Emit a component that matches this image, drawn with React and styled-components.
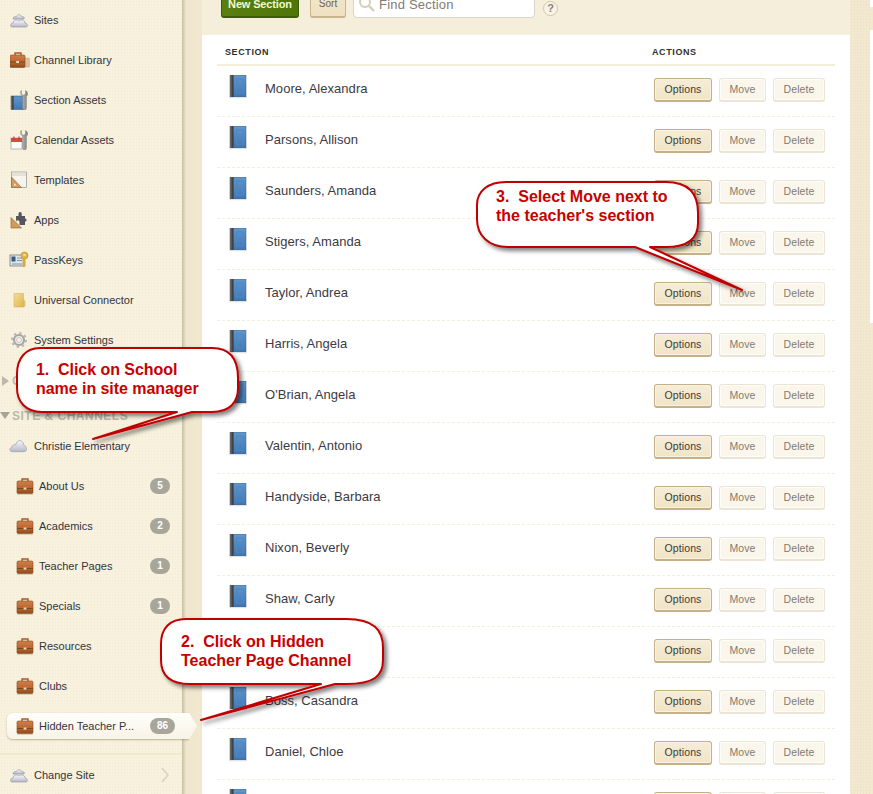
import React from 'react';
import styled, { createGlobalStyle } from 'styled-components';

const Global = createGlobalStyle`
  html, body { margin: 0; padding: 0; background: #fff; }
  body { font-family: "Liberation Sans", Arial, sans-serif; }
`;

const Page = styled.div`
  position: relative;
  width: 873px;
  height: 794px;
  overflow: hidden;
  display: flex;
  background: #fff;
`;
const Sidebar = styled.nav`
  position: relative;
  z-index: 1;
  flex: none;
  width: 182px;
  height: 794px;
  box-sizing: border-box;
  background-color: #f7f1de;
  background-image: radial-gradient(#f2ead2 0.7px, transparent 0.8px);
  background-size: 3px 3px;
  display: flex;
  flex-direction: column;
`;
const Gutter = styled.div`
  flex: none;
  width: 20px;
  background: linear-gradient(90deg, #c9bea0 0, #dcd2b6 2px, #efe6cd 4px, #f1e8cf 100%);
`;
const Main = styled.main`
  flex: none;
  width: 648px;
  display: flex;
  flex-direction: column;
  background: #fff;
`;
const RightEdge = styled.div`
  flex: none;
  width: 20px;
  background-color: #f2e8cf;
  background-image: radial-gradient(#ebdfc0 0.7px, transparent 0.8px);
  background-size: 3px 3px;
`;
const Rail = styled.div`
  flex: 1;
  display: flex;
  flex-direction: column;
  padding-top: 7px;
`;
const RailTab = styled.div`
  flex: ${p => (p.$grow ? 1 : 'none')};
  height: ${p => (p.$grow ? 'auto' : '23px')};
  margin-top: ${p => (p.$grow ? 293 : 0)}px;
  background: #f2e8cf;
`;
const Item = styled.a`
  height: 40px;
  flex: none;
  display: flex;
  align-items: center;
  gap: ${p => (p.$child ? 5 : 6)}px;
  padding-left: ${p => (p.$child ? 16 : 10)}px;
  font-size: 11px;
  color: #33333f;
  span.t { flex: 1; white-space: nowrap; }
`;
const SiteItem = styled(Item)`
  height: 31px;
  margin-bottom: 5px;
`;
const ActiveItem = styled(Item)`
  position: relative;
  box-sizing: border-box;
  width: 190px;
  height: 26px;
  margin: 7px 0 7px 7px;
  padding-left: 9px;
  padding-right: 22px;
  background: linear-gradient(#fffefb, #f8f3e5);
  border-radius: 6px 0 0 6px;
  clip-path: polygon(-4px -4px, 180px -4px, 190px 13px, 180px 30px, -4px 30px);
  box-shadow: 0 1px 2px rgba(120, 105, 70, .45);
`;
const Badge = styled.span`
  flex: none;
  width: ${p => (p.$wide ? 25 : 20)}px;
  height: 16px;
  margin-right: ${p => (p.$wide ? 0 : 12)}px;
  border-radius: 9px;
  background: #a8a69b;
  color: #fff;
  font-size: 10px;
  font-weight: bold;
  line-height: 15px;
  text-align: center;
`;
const GroupHead = styled.div`
  flex: none;
  height: ${p => p.$h}px;
  display: flex;
  align-items: center;
  gap: ${p => (p.$open ? 2 : 3)}px;
  font-size: 12px;
  font-weight: bold;
  color: #bcb8aa;
  white-space: nowrap;
  letter-spacing: .5px;
  &::before {
    content: "";
    width: 0; height: 0;
    border-style: solid;
    ${p => p.$open
      ? 'border-width: 7px 5px 0 5px; border-color: #a8a396 transparent transparent transparent;'
      : 'border-width: 5px 0 5px 7px; border-color: transparent transparent transparent #bcb8aa; margin-left: 2px;'}
  }
`;
const Foot = styled(Item)`
  border-top: 2px solid #f0e8cf;
  margin-top: 7px;
  height: 40px;
  padding-right: 13px;
`;
const Toolbar = styled.div`
  flex: none;
  height: 35px;
  box-sizing: border-box;
  padding: 0 0 17px 19px;
  background: #f5eeda;
  display: flex;
  align-items: flex-end;
  overflow: hidden;
`;
const NewBtn = styled.div`
  width: 78px;
  height: 30px;
  flex: none;
  border-radius: 3px;
  border: 1px solid #3d5c06;
  border-bottom-width: 2px;
  box-sizing: border-box;
  background: linear-gradient(90deg, #58800f, #4f7509);
  color: #f1f8d2;
  font-size: 11px;
  font-weight: bold;
  line-height: 30px;
  letter-spacing: -.15px;
  text-align: center;
`;
const SortBtn = styled.div`
  width: 36px;
  height: 30px;
  flex: none;
  margin-left: 11px;
  border-radius: 3px;
  border: 1px solid #c8b48d;
  border-bottom-width: 2px;
  box-sizing: border-box;
  background: linear-gradient(#f2e7cd, #efe1c0);
  color: #6a6255;
  font-size: 10px;
  line-height: 30px;
  text-align: center;
`;
const Search = styled.div`
  width: 182px;
  height: 30px;
  flex: none;
  margin-left: 7px;
  box-sizing: border-box;
  background: #fff;
  border: 1px solid #d8d5cc;
  border-radius: 4px;
  display: flex;
  align-items: flex-end;
  gap: 4px;
  padding: 0 0 5px 4px;
  font-size: 13px;
  letter-spacing: .2px;
  color: #807c74;
`;
const Help = styled.div`
  width: 13px;
  height: 13px;
  flex: none;
  margin: 0 0 2px 8px;
  border-radius: 50%;
  border: 1px solid #d9c69f;
  background: #f8f3e6;
  color: #8a8376;
  font-size: 11px;
  font-weight: bold;
  line-height: 13px;
  text-align: center;
`;
const Table = styled.div`
  flex: 1;
  padding: 0 15px;
  display: flex;
  flex-direction: column;
`;
const Head = styled.div`
  flex: none;
  height: 31px;
  box-sizing: border-box;
  border-bottom: 2px solid #f5eeda;
  display: flex;
  align-items: center;
  padding: 4px 0 0 8px;
  font-size: 9px;
  font-weight: bold;
  color: #33302c;
  letter-spacing: .6px;
`;
const HeadCell = styled.span`
  width: ${p => p.$w}px;
`;
const Row = styled.div`
  flex: none;
  height: 51px;
  box-sizing: border-box;
  border-bottom: 1px dashed #f3eee0;
  display: flex;
  align-items: center;
  padding: 0 10px 6px 12px;
`;
const Name = styled.div`
  flex: 1;
  margin-left: 16px;
  font-size: 13px;
  letter-spacing: .04px;
  color: #3c3a44;
  white-space: nowrap;
`;
const Btn = styled.div`
  flex: none;
  width: ${p => p.$w}px;
  height: 24px;
  margin-left: ${p => p.$gap}px;
  box-sizing: border-box;
  border-radius: 3px;
  margin-top: 4px;
  font-size: 10.5px;
  line-height: 20px;
  text-align: center;
  letter-spacing: .1px;
  ${p => p.$primary
    ? `background: linear-gradient(#f6edd8, #f1e4c6); border: 1px solid #c4b089; border-bottom-width: 2px; color: #3d3a35; box-shadow: inset 0 0 0 1px #f9f2e2;`
    : `background: #faf6ec; border: 1px solid #ece5d5; border-bottom-width: 2px; color: #827b6e; box-shadow: inset 0 0 0 1px #fffdf8;`}
`;

/* annotation callouts that lie over the page */
const Callout = styled.div`
  position: absolute;
  z-index: 2;
  left: ${p => p.$x}px;
  top: ${p => p.$y}px;
  width: ${p => p.$w}px;
  height: ${p => p.$h}px;
  pointer-events: none;
  svg { position: absolute; left: 0; top: 0; overflow: visible; }
`;
const CalloutText = styled.div`
  position: absolute;
  left: ${p => p.$x}px;
  top: ${p => p.$y}px;
  font-size: 16px;
  line-height: 19px;
  font-weight: bold;
  color: #c80000;
  white-space: pre;
  letter-spacing: ${p => p.$ls}px;
`;

const Defs = () => (
  <svg width="0" height="0" style={{ position: 'absolute' }}>
    <defs>
      <linearGradient id="gCase" x1="0" y1="0" x2="0" y2="1"><stop offset="0" stopColor="#cf7f48" /><stop offset=".55" stopColor="#b8682f" /><stop offset="1" stopColor="#8f4a1e" /></linearGradient>
      <linearGradient id="gBook" x1="0" y1="0" x2="0" y2="1"><stop offset="0" stopColor="#5f97ce" /><stop offset="1" stopColor="#3e77b4" /></linearGradient>
      <linearGradient id="gSpine" x1="0" y1="0" x2="1" y2="0"><stop offset="0" stopColor="#777" /><stop offset="1" stopColor="#2d2d2d" /></linearGradient>
      <linearGradient id="gCloud" x1="0" y1="0" x2="0" y2="1"><stop offset="0" stopColor="#f7f7fb" /><stop offset="1" stopColor="#b6b8c8" /></linearGradient>
      <linearGradient id="gFold" x1="0" y1="0" x2="1" y2="1"><stop offset="0" stopColor="#f6dc92" /><stop offset="1" stopColor="#dfb552" /></linearGradient>
      <linearGradient id="gSteel" x1="0" y1="0" x2="1" y2="0"><stop offset="0" stopColor="#c8c8c8" /><stop offset="1" stopColor="#7d7d7d" /></linearGradient>
    </defs>
  </svg>
);
const Ico = styled.svg`flex: none; display: block;`;

const CaseIcon = () => (
  <Ico width="18" height="18" viewBox="0 0 18 18">
    <path d="M6 4.500V2h6v2.500" fill="none" stroke="#a65a26" strokeWidth="1.400" />
    <rect x="1" y="4" width="16" height="12.500" rx="1.200" fill="url(#gCase)" stroke="#8a4a1f" strokeWidth=".6" />
    <path d="M1 11.500h16" stroke="#7f4219" strokeWidth=".9" />
    <rect x="7.600" y="10.500" width="2.800" height="2" fill="#e7dcc5" />
    <rect x="1" y="17" width="16" height="1" fill="#d9d2c0" />
  </Ico>
);
const LibraryIcon = () => (
  <Ico width="20" height="18" viewBox="0 0 20 18" style={{ marginRight: -2 }}>
    <rect x="13" y="7" width="6.500" height="9" rx=".8" fill="#dcbf9d" stroke="#c7a780" strokeWidth=".5" />
    <path d="M5 4.500V2h6v2.500" fill="none" stroke="#a65a26" strokeWidth="1.400" />
    <rect x="0" y="4" width="15" height="12.500" rx="1.200" fill="url(#gCase)" stroke="#8a4a1f" strokeWidth=".6" />
    <path d="M0 11h15" stroke="#7f4219" strokeWidth=".9" />
    <rect x="6.200" y="10" width="2.800" height="2" fill="#e7dcc5" />
  </Ico>
);
const BookIcon = () => (
  <Ico width="20" height="26" viewBox="0 0 20 26">
    <rect x="1" y="0" width="16" height="22" fill="url(#gBook)" />
    <rect x="1" y="0" width="3.500" height="22" fill="url(#gSpine)" />
    <rect x="7.500" y="4" width="7" height="14" fill="none" stroke="#4f86bf" strokeWidth="1" />
    <rect x="1" y="0" width="16" height="22" fill="none" stroke="#4a5a6a" strokeWidth=".5" />
    <rect x="0" y="22" width="18" height="1.200" fill="#e2e2e2" />
  </Ico>
);
const CloudsIcon = () => (
  <Ico width="18" height="18" viewBox="0 0 18 18">
    <path d="M3 8c0-2 2-3 3-2 1-3 5-3 6 0 2-1 3 1 2 2z" fill="url(#gCloud)" stroke="#8d8fa3" strokeWidth=".6" />
    <path d="M2 16c-2 0-2-4 1-4 0-3 4-4 6-2 2-2 6-1 6 2 3 0 3 4 1 4z" fill="url(#gCloud)" stroke="#8d8fa3" strokeWidth=".6" />
  </Ico>
);
const CloudIcon = () => (
  <Ico width="19" height="14" viewBox="0 0 20 14" style={{ marginLeft: -1 }}>
    <path d="M3.500 13C.5 13 0 9 3 8.200 3.500 5.500 6 5 7 6 8-.3 15-.3 15.300 6c3.500.2 4.500 7 .7 7z" fill="url(#gCloud)" stroke="#9a9cb0" strokeWidth=".7" />
  </Ico>
);
const WrenchPart = () => (
  <path d="M11.500 0.500v3.500l2 1.300 2-1.300V.5c2.400 1 2.800 4.500.9 6V18a1.900 1.900 0 0 1-3.800 0V6.500C10.700 5 9.200 1.500 11.500.5z" fill="url(#gSteel)" stroke="#6d6d6d" strokeWidth=".4" />
);
const SectionAssetIcon = () => (
  <Ico width="18" height="20" viewBox="0 0 18 20">
    <rect x="1" y="6" width="13" height="13.500" fill="url(#gBook)" stroke="#3d4a58" strokeWidth=".5" />
    <rect x="1" y="6" width="2.500" height="13.500" fill="url(#gSpine)" />
    <WrenchPart />
  </Ico>
);
const CalendarIcon = () => (
  <Ico width="18" height="20" viewBox="0 0 18 20">
    <rect x="1" y="8" width="11" height="11" fill="#fbfbfb" stroke="#777" strokeWidth=".5" />
    <rect x="1" y="8" width="11" height="4" fill="#dc4a38" />
    <path d="M4 6.500v3M9 6.500v3" stroke="#555" strokeWidth="1" />
    <WrenchPart />
  </Ico>
);
const TemplateIcon = () => (
  <Ico width="18" height="18" viewBox="0 0 18 18">
    <rect x="1.500" y="1" width="15" height="15.500" fill="#f6f4ec" stroke="#909090" strokeWidth=".7" />
    <rect x="2" y="1.500" width="14" height="3.500" fill="#e4e2d6" />
    <path d="M1.500 6 11.500 16.500H1.500z" fill="#d49a5c" stroke="#8f5f2c" strokeWidth=".6" />
    <path d="M4 12l2.500 2.500H4z" fill="#f4f2ea" />
  </Ico>
);
const AppsIcon = () => (
  <Ico width="18" height="18" viewBox="0 0 18 18">
    <path d="M1 6.500 11.500 17H1z" fill="#d49a5c" stroke="#8f5f2c" strokeWidth=".6" />
    <path d="M6 5h2.500V2.500a1.600 1.600 0 0 1 3.200 0V5H15v2.500a1.600 1.600 0 0 1 0 3.200V14H9.500v-3a1.700 1.700 0 0 0-3.400 0z" fill="#55565c" />
  </Ico>
);
const PassKeyIcon = () => (
  <Ico width="20" height="18" viewBox="0 0 20 18" style={{ marginLeft: -1, marginRight: -1 }}>
    <rect x="1" y="4" width="14" height="11" fill="#dfe6ea" stroke="#5f6a70" strokeWidth=".7" />
    <rect x="2.500" y="5.500" width="4" height="5" fill="#3c5a78" />
    <path d="M8 7h5M8 9.500h5M3 13h10" stroke="#6f7c84" strokeWidth=".8" />
    <circle cx="15.500" cy="4.500" r="3.500" fill="#e3b54a" stroke="#a77d1f" strokeWidth=".5" />
    <path d="M16.500 7v8l-1.500 1.500-1.500-1.500V7" fill="#d9a93f" />
    <rect x="14.300" y="3.400" width="2.400" height="1.200" fill="#fff3c9" />
  </Ico>
);
const FolderIcon = () => (
  <Ico width="18" height="18" viewBox="0 0 18 18">
    <path d="M4 2.500h9.500V16H4z" fill="url(#gFold)" stroke="#d0ac5e" strokeWidth=".5" />
    <path d="M13.500 9a1.500 1.500 0 0 1 1.500 1.500V15l-1.500 1z" fill="#e9c878" stroke="#c79e4b" strokeWidth=".4" />
  </Ico>
);
const GearIcon = () => (
  <Ico width="18" height="18" viewBox="0 0 18 18">
    <circle cx="9" cy="9" r="5" fill="none" stroke="#a5a5a5" strokeWidth="2.200" />
    <circle cx="9" cy="9" r="7" fill="none" stroke="#b5b5b5" strokeWidth="2" strokeDasharray="2.300 3.200" />
    <circle cx="9" cy="9" r="2.500" fill="#f2f2f2" stroke="#a8a8a8" strokeWidth=".6" />
  </Ico>
);

const topItems = [
  ['Sites', <CloudsIcon />], ['Channel Library', <LibraryIcon />], ['Section Assets', <SectionAssetIcon />],
  ['Calendar Assets', <CalendarIcon />], ['Templates', <TemplateIcon />], ['Apps', <AppsIcon />],
  ['PassKeys', <PassKeyIcon />], ['Universal Connector', <FolderIcon />], ['System Settings', <GearIcon />],
];
const channels = [['About Us', 5], ['Academics', 2], ['Teacher Pages', 1], ['Specials', 1], ['Resources'], ['Clubs']];
const names = ['Moore, Alexandra', 'Parsons, Allison', 'Saunders, Amanda', 'Stigers, Amanda', 'Taylor, Andrea', 'Harris, Angela',
  "O'Brian, Angela", 'Valentin, Antonio', 'Handyside, Barbara', 'Nixon, Beverly', 'Shaw, Carly', 'Carter, Casandra', 'Boss, Casandra', 'Daniel, Chloe', ''];

const Bubble = ({ id, w, h, d }) => (
  <svg width={w} height={h} viewBox={`0 0 ${w} ${h}`}>
    <defs>
      <filter id={id} x="-10%" y="-10%" width="125%" height="130%">
        <feDropShadow dx="3" dy="3" stdDeviation="2.200" floodColor="#000" floodOpacity=".5" />
      </filter>
    </defs>
    <path d={d} fill="#fff" stroke="#c00000" strokeWidth="2" strokeLinejoin="round" filter={`url(#${id})`} />
  </svg>
);

export default function App() {
  return (
    <Page>
      <Global />
      <Defs />
      <Sidebar>
        {topItems.map(([t, i]) => <Item key={t}>{i}<span className="t">{t}</span></Item>)}
        <GroupHead $h={41}>CHANNEL GROUPS</GroupHead>
        <GroupHead $h={29} $open>SITE &amp; CHANNELS</GroupHead>
        <SiteItem><CloudIcon /><span className="t">Christie Elementary</span></SiteItem>
        {channels.map(([t, n]) => (
          <Item $child key={t}><CaseIcon /><span className="t">{t}</span>{n && <Badge>{n}</Badge>}</Item>
        ))}
        <ActiveItem $child><CaseIcon /><span className="t">Hidden Teacher P...</span><Badge $wide>86</Badge></ActiveItem>
        <Foot>
          <CloudsIcon /><span className="t">Change Site</span>
          <svg width="8" height="16" viewBox="0 0 8 16"><path d="M1 1l6 7-6 7" fill="none" stroke="#d9d3c1" strokeWidth="1.600" /></svg>
        </Foot>
      </Sidebar>
      <Gutter />
      <Main>
        <Toolbar>
          <NewBtn>New Section</NewBtn>
          <SortBtn>Sort</SortBtn>
          <Search>
            <svg width="17" height="17" viewBox="0 0 17 17"><circle cx="7" cy="7" r="5" fill="none" stroke="#d6ceb9" strokeWidth="2" /><path d="M11 11l5 5" stroke="#d6ceb9" strokeWidth="2.400" /></svg>
            <span>Find Section</span>
          </Search>
          <Help>?</Help>
        </Toolbar>
        <Table>
          <Head><HeadCell $w={427}>SECTION</HeadCell><HeadCell>ACTIONS</HeadCell></Head>
          {names.map((n, i) => (
            <Row key={i}>
              <BookIcon />
              <Name>{n}</Name>
              <Btn $w={58} $gap={0} $primary>Options</Btn>
              <Btn $w={47} $gap={7}>Move</Btn>
              <Btn $w={52} $gap={7}>Delete</Btn>
            </Row>
          ))}
        </Table>
      </Main>
      <RightEdge />
      <Rail><RailTab /><RailTab $grow /></Rail>

      <Callout $x={0} $y={340} $w={260} $h={120}>
        <Bubble id="c1" w={260} h={120} d="M40 8H212C230 8 238 18 238 38V48C238 62 230 72 212 72H192L93 99 177 72H42C26 72 17 62 17 48V34C17 18 26 8 40 8Z" />
        <CalloutText $x={36} $y={20} $ls={-0.05}>{'1.  Click on School\nname in site manager'}</CalloutText>
      </Callout>
      <Callout $x={150} $y={610} $w={250} $h={120}>
        <Bubble id="c2" w={250} h={120} d="M36 9H196C224 9 233 20 233 38V50C233 66 224 74 196 74H185L51 110 171 74H40C20 74 11 66 11 50V34C11 18 20 9 36 9Z" />
        <CalloutText $x={31} $y={22} $ls={0}>{'2.  Click on Hidden\nTeacher Page Channel'}</CalloutText>
      </Callout>
      <Callout $x={470} $y={175} $w={300} $h={130}>
        <Bubble id="c3" w={300} h={130} d="M36 7H196C218 7 228 18 228 38V48C228 64 218 72 196 72H180L272 115 165 72H38C18 72 7 60 7 44V30C7 16 18 7 36 7Z" />
        <CalloutText $x={26} $y={12} $ls={0}>{"3.  Select Move next to\nthe teacher's section"}</CalloutText>
      </Callout>
    </Page>
  );
}
